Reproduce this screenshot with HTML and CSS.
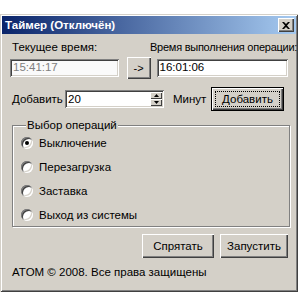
FILE: index.html
```html
<!DOCTYPE html>
<html lang="ru">
<head>
<meta charset="utf-8">
<title>Таймер</title>
<link rel="stylesheet" href="styles.css">
</head>
<body>
<div class="window">
  <div class="titlebar">
    <span class="title">Таймер (Отключён)</span>
    <span class="close"><svg width="8" height="7" viewBox="0 0 8 7"><path d="M0 0h2l2 2 2-2h2L5 3.5 8 7H6L4 5 2 7H0l3-3.5z" fill="#000"/></svg></span>
  </div>
  <div class="content">
    <div class="labels">
      <span class="lbl-cur">Текущее время:</span>
      <span class="lbl-run">Время выполнения операции:</span>
    </div>
    <div class="inputs">
      <div class="edit disabled cur">15:41:17</div>
      <div class="btn arrow">-&gt;</div>
      <div class="edit run">16:01:06</div>
    </div>
    <div class="addrow">
      <span class="lbl-add">Добавить</span>
      <div class="spin">
        <div class="spin-text">20</div>
        <div class="spin-btns">
          <div class="spin-btn"><svg width="5" height="3" viewBox="0 0 5 3"><path d="M2.5 0L5 3H0z" fill="#000"/></svg></div>
          <div class="spin-btn"><svg width="5" height="3" viewBox="0 0 5 3"><path d="M0 0h5L2.5 3z" fill="#000"/></svg></div>
        </div>
      </div>
      <span class="lbl-min">Минут</span>
      <div class="btn default"><span class="focus">Добавить</span></div>
    </div>
    <fieldset class="group">
      <legend>Выбор операций</legend>
      <div class="radios">
        <div class="radio"><span class="dot checked"></span>Выключение</div>
        <div class="radio"><span class="dot"></span>Перезагрузка</div>
        <div class="radio"><span class="dot"></span>Заставка</div>
        <div class="radio"><span class="dot"></span>Выход из системы</div>
      </div>
    </fieldset>
    <div class="actions">
      <div class="btn hide">Спрятать</div>
      <div class="btn start">Запустить</div>
    </div>
    <div class="footer">ATOM © 2008. Все права защищены</div>
  </div>
</div>
</body>
</html>
```
FILE: styles.css
```css
* { box-sizing: border-box; }
html, body { margin: 0; padding: 0; background: #fff; }
body {
  font-family: "Liberation Sans", Arial, sans-serif;
  font-size: 11px;
  line-height: 13px;
  color: #000;
}
.window {
  margin-top: 14px;
  width: 298px;
  height: 278px;
  background: #d4d0c8;
  padding: 2px;
  box-shadow: inset 1px 1px 0 #d4d0c8, inset -1px -1px 0 #404040,
              inset 2px 2px 0 #fff, inset -2px -2px 0 #808080;
  display: flex;
  flex-direction: column;
}
.titlebar {
  height: 18px;
  background: linear-gradient(to right, #0a246a, #a6caf0);
  display: flex;
  align-items: center;
  justify-content: space-between;
  padding: 0 2px 0 3px;
}
.title {
  color: #fff;
  font-weight: bold;
  font-size: 11.5px;
}
.close {
  width: 16px;
  height: 14px;
  background: #d4d0c8;
  box-shadow: inset 1px 1px 0 #fff, inset -1px -1px 0 #404040, inset -2px -2px 0 #808080;
  display: flex;
  align-items: center;
  justify-content: center;
}
.content {
  flex: 1;
  padding: 7px 8px 0 10px;
  display: flex;
  flex-direction: column;
}
.labels {
  display: flex;
  height: 13px;
  white-space: nowrap;
  font-size: 11.5px;
}
.lbl-cur { width: 138px; flex: none; }
.lbl-run { flex: none; font-size: 11px; letter-spacing: -0.25px; }
.inputs {
  margin-top: 3px;
  display: flex;
  align-items: center;
  height: 22px;
}
.edit {
  height: 18px;
  background: #fff;
  padding: 2px 3px;
  box-shadow: inset 1px 1px 0 #808080, inset -1px -1px 0 #fff,
              inset 2px 2px 0 #404040, inset -2px -2px 0 #d4d0c8;
  font-size: 11.5px;
}
.edit.disabled { color: #808080; background: #fafafa; }
.cur { width: 109px; margin-left: -2px; }
.arrow { width: 24px; height: 22px; margin-left: 8px; }
.run { width: 132px; margin-left: 6px; }
.btn {
  background: #d4d0c8;
  display: flex;
  align-items: center;
  justify-content: center;
  box-shadow: inset 1px 1px 0 #fff, inset -1px -1px 0 #404040, inset -2px -2px 0 #808080;
}
.addrow {
  margin-top: 8px;
  height: 24px;
  display: flex;
  align-items: center;
  font-size: 11.5px;
}
.lbl-add { width: 53px; }
.spin {
  width: 99px;
  height: 18px;
  display: flex;
  background: #fff;
  padding: 2px;
  box-shadow: inset 1px 1px 0 #808080, inset -1px -1px 0 #fff,
              inset 2px 2px 0 #404040, inset -2px -2px 0 #d4d0c8;
}
.spin-text { flex: 1; padding: 0 1px; line-height: 14px; }
.spin-btns { width: 12px; display: flex; flex-direction: column; }
.spin-btn {
  flex: 1;
  background: #d4d0c8;
  display: flex;
  align-items: center;
  justify-content: center;
  box-shadow: inset 1px 1px 0 #fff, inset -1px -1px 0 #404040;
}
.lbl-min { margin-left: 9px; width: 38px; }
.default {
  width: 73px;
  height: 24px;
  border: 1px solid #000;
  padding: 3px;
}
.focus {
  width: 100%;
  height: 100%;
  border: 1px dotted #000;
  display: flex;
  align-items: center;
  justify-content: center;
}
.group {
  margin: 8px 0 0 0;
  width: 278px;
  height: 108px;
  border: 1px solid #808080;
  box-shadow: inset 1px 1px 0 #fff, 1px 1px 0 #fff;
  padding: 0 0 0 8px;
  min-width: 0;
}
.group legend {
  padding: 0 1px;
  margin-left: 5px;
  background: #d4d0c8;
  font-size: 11.5px;
}
.radios { margin-top: -1px; }
.radio {
  height: 24px;
  display: flex;
  align-items: center;
  font-size: 11.5px;
}
.dot {
  width: 12px;
  height: 12px;
  border-radius: 50%;
  background: #fff;
  margin-right: 6px;
  box-shadow: inset 1px 1px 0 #808080, inset -1px -1px 0 #fff,
              inset 2px 2px 0 #404040, inset -2px -2px 0 #d4d0c8;
  display: flex;
  align-items: center;
  justify-content: center;
}
.dot.checked::after {
  content: "";
  width: 4px;
  height: 4px;
  border-radius: 50%;
  background: #000;
}
.actions {
  margin-top: 7px;
  display: flex;
  justify-content: flex-end;
  gap: 6px;
}
.actions .btn { height: 24px; font-size: 11.5px; }
.hide { width: 72px; }
.start { width: 68px; }
.footer {
  margin-top: 8px;
  font-size: 11.5px;
}
```
